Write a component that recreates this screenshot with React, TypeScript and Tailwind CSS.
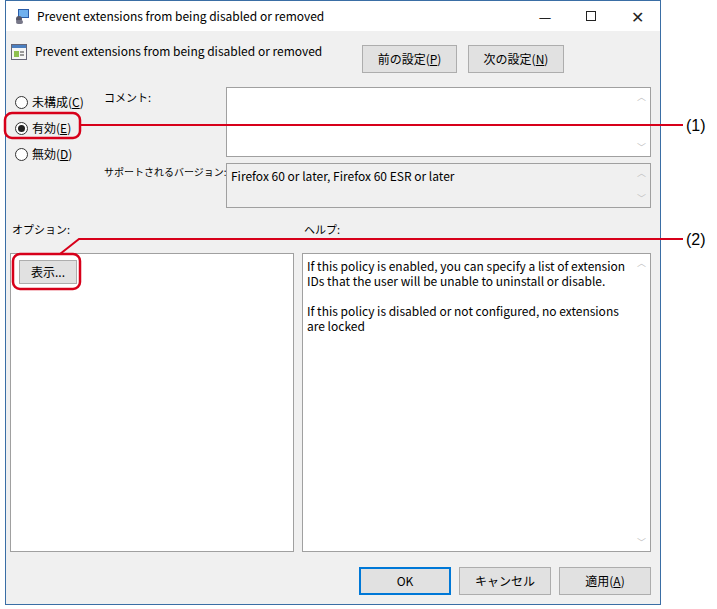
import React from 'react'

const font = { fontFamily: '"Noto Sans CJK JP", "Liberation Sans", sans-serif' }

function Radio({ label, u, checked }: { label: string; u: string; checked?: boolean }) {
  return (
    <div className="flex items-center gap-1 h-[26px] text-[12px] text-black">
      <span className="w-[13px] h-[13px] rounded-full border border-[#333] bg-white flex items-center justify-center">
        {checked && <span className="w-[7px] h-[7px] rounded-full bg-[#222]" />}
      </span>
      <span>
        {label}(<span className="underline">{u}</span>)
      </span>
    </div>
  )
}

function Btn({ children, w, primary }: { children: React.ReactNode; w: string; primary?: boolean }) {
  return (
    <div
      className={`${w} h-[28px] flex items-center justify-center text-[12px] bg-[#e1e1e1] border ${
        primary ? 'border-[#0078d7] border-2' : 'border-[#adadad]'
      }`}
    >
      {children}
    </div>
  )
}

function ScrollBox({ children, h }: { children?: React.ReactNode; h: string }) {
  return (
    <div className={`flex ${h} border border-[#a0a0a0] bg-white`}>
      <div className="flex-1 px-1 py-[4px] text-[12px] leading-[15px]">{children}</div>
      <div className="w-[17px] flex flex-col justify-between items-center text-[#c0c0c0] text-[9px] py-[2px]">
        <span>︿</span>
        <span>﹀</span>
      </div>
    </div>
  )
}

export default function App() {
  return (
    <div className="relative w-[717px] h-[609px] bg-white" style={font}>
      <div className="w-[656px] h-[605px] ml-[5px] border border-[#3a6ea5] bg-[#f0f0f0] flex flex-col">
        {/* Title bar */}
        <div className="h-[30px] bg-white flex items-center">
          <svg className="ml-[8px]" width="16" height="16" viewBox="0 0 16 16">
            <rect x="4" y="1" width="11" height="9" fill="#2a5ca8" />
            <rect x="5" y="2" width="9" height="7" fill="#6fb0ee" />
            <circle cx="5" cy="11" r="3" fill="#556" />
            <rect x="2" y="12" width="7" height="4" rx="2" fill="#778" />
          </svg>
          <span className="ml-[7px] text-[12px]">Prevent extensions from being disabled or removed</span>
          <div className="ml-auto flex items-center text-[#222]">
            <span className="w-[46px] text-center text-[14px]">—</span>
            <span className="w-[46px] flex justify-center">
              <span className="w-[10px] h-[10px] border border-[#222]" />
            </span>
            <span className="w-[46px] text-center text-[16px]">✕</span>
          </div>
        </div>

        <div className="flex-1 px-[3px] flex flex-col">
          {/* Header row */}
          <div className="flex items-start mt-[12px] h-[44px]">
            <svg className="ml-[2px] mt-[1px]" width="16" height="16" viewBox="0 0 16 16">
              <rect x="0.5" y="0.5" width="15" height="15" fill="#f6f6f6" stroke="#667" />
              <rect x="1" y="1" width="14" height="3" fill="#4b7fc0" />
              <rect x="3" y="7" width="5" height="6" fill="#8fc04f" />
              <rect x="9" y="7" width="4" height="2" fill="#999" />
              <rect x="9" y="10" width="4" height="2" fill="#999" />
            </svg>
            <span className="ml-[8px] text-[12px] leading-[16px]">Prevent extensions from being disabled or removed</span>
            <div className="ml-auto mr-[93px] mt-[2px] flex gap-[11px]">
              <Btn w="w-[95px]">前の設定(<span className="underline">P</span>)</Btn>
              <Btn w="w-[96px]">次の設定(<span className="underline">N</span>)</Btn>
            </div>
          </div>

          {/* Settings */}
          <div className="flex">
            <div className="w-[95px] pl-[6px] pt-[2px]">
              <Radio label="未構成" u="C" />
              <Radio label="有効" u="E" checked />
              <Radio label="無効" u="D" />
            </div>
            <div className="flex-1 flex flex-col gap-[6px] pr-[6px]">
              <div className="flex">
                <span className="w-[122px] text-[11px] pt-[2px]">コメント:</span>
                <div className="flex-1">
                  <ScrollBox h="h-[70px]" />
                </div>
              </div>
              <div className="flex">
                <span className="w-[122px] text-[10px] whitespace-nowrap pt-[1px]">サポートされるバージョン:</span>
                <div className="flex-1 [&>div]:bg-[#f0f0f0]">
                  <ScrollBox h="h-[45px]">Firefox 60 or later, Firefox 60 ESR or later</ScrollBox>
                </div>
              </div>
            </div>
          </div>

          <div className="flex mt-[13px] h-[32px] text-[11px]">
            <span className="w-[295px] pl-[3px]">オプション:</span>
            <span>ヘルプ:</span>
          </div>

          {/* Panels */}
          <div className="flex gap-[8px] pr-[6px]">
            <div className="w-[284px] h-[299px] border border-[#a0a0a0] bg-white ml-[1px] p-[6px] pl-[8px]">
              <div className="w-[58px] h-[24px] bg-[#e1e1e1] border border-[#adadad] flex items-center justify-center text-[12px]">
                表示...
              </div>
            </div>
            <div className="flex-1">
              <ScrollBox h="h-[299px]">
                <p>If this policy is enabled, you can specify a list of extension IDs that the user will be unable to uninstall or disable.</p>
                <p className="mt-[15px]">If this policy is disabled or not configured, no extensions are locked</p>
              </ScrollBox>
            </div>
          </div>

          <div className="flex justify-end gap-[8px] mt-[15px] pr-[6px]">
            <Btn w="w-[92px]" primary>OK</Btn>
            <Btn w="w-[92px]">キャンセル</Btn>
            <Btn w="w-[92px]">適用(<span className="underline">A</span>)</Btn>
          </div>
        </div>
      </div>

      {/* Callouts */}
      <svg className="absolute left-0 top-0 pointer-events-none" width="717" height="609">
        <rect x="5" y="113" width="75" height="25" rx="7" fill="none" stroke="#d7001a" strokeWidth="2.5" />
        <line x1="80" y1="125" x2="683" y2="125" stroke="#d7001a" strokeWidth="2" />
        <rect x="13" y="254" width="67" height="35" rx="7" fill="none" stroke="#d7001a" strokeWidth="2.5" />
        <polyline points="60,254 79,239 683,239" fill="none" stroke="#d7001a" strokeWidth="2" />
      </svg>
      <span className="absolute left-[686px] top-[114px] text-[16px]" style={{ fontFamily: '"Liberation Sans", sans-serif' }}>(1)</span>
      <span className="absolute left-[686px] top-[228px] text-[16px]" style={{ fontFamily: '"Liberation Sans", sans-serif' }}>(2)</span>
    </div>
  )
}
